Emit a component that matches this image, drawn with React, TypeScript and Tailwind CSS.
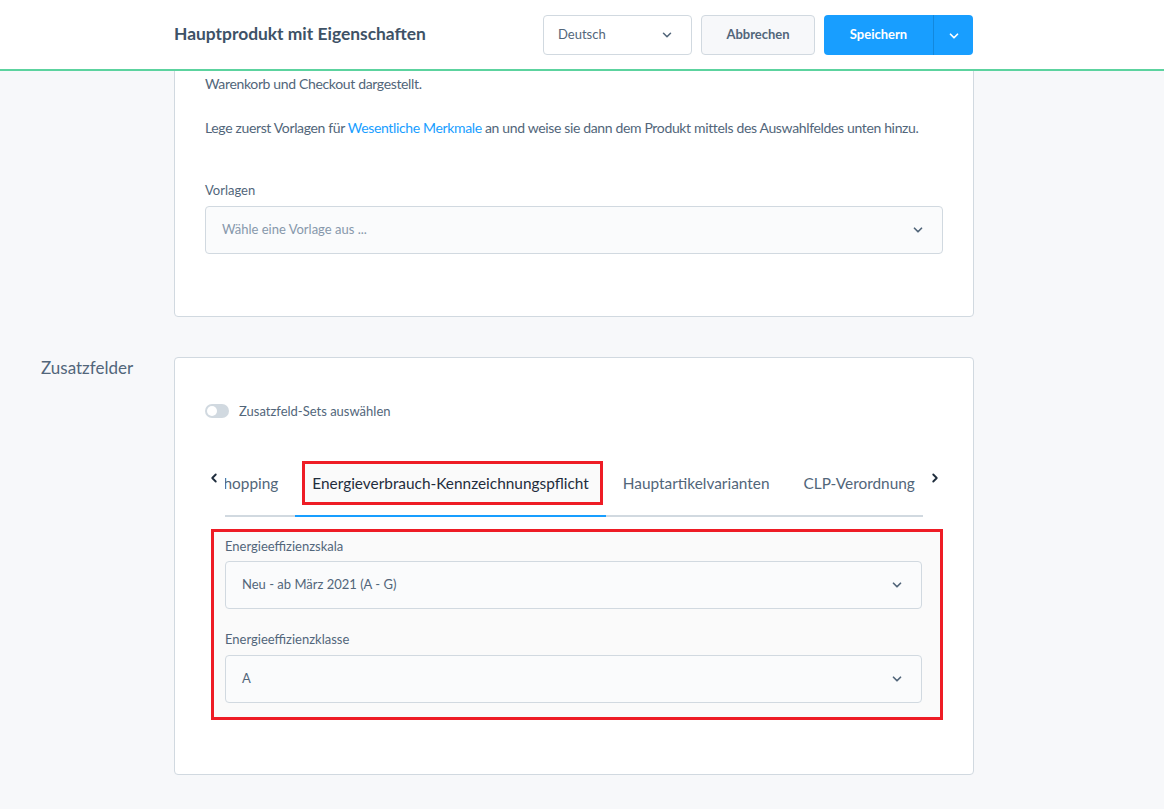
import { useLayoutEffect, useRef } from 'react'
import { ChevronDown, ChevronLeft, ChevronRight } from 'lucide-react'

const tabs = [
  'Google Shopping',
  'Energieverbrauch-Kennzeichnungspflicht',
  'Hauptartikelvarianten',
  'CLP-Verordnung',
]

function Select({ value, placeholder }: { value?: string; placeholder?: string }) {
  return (
    <div className="flex h-[48px] items-center justify-between rounded-[4px] border border-[#d1d9e0] bg-[#fafbfc] pl-[16px] pr-[17px]">
      <span className={`text-[13px] ${value ? 'text-[#52667a]' : 'text-[#8798ab]'}`}>{value ?? placeholder}</span>
      <ChevronDown className="h-[14px] w-[14px] text-[#52667a]" strokeWidth={3} />
    </div>
  )
}

function Tabs() {
  const scroller = useRef<HTMLDivElement>(null)
  const active = useRef<HTMLButtonElement>(null)

  // scroll so the active tab sits just after the partially hidden first one
  useLayoutEffect(() => {
    if (scroller.current && active.current) {
      scroller.current.scrollLeft = active.current.offsetLeft - 70
    }
  }, [])

  return (
    <div className="mt-[38px] flex items-start">
      <div className="flex w-[20px] justify-start pl-[2px] pt-[11px]">
        <ChevronLeft className="h-[14px] w-[14px] text-[#1f2d3d]" strokeWidth={3.2} />
      </div>
      <div ref={scroller} className="relative flex-1 overflow-hidden shadow-[inset_0_-2px_0_#d1d9e0]">
        <div className="flex w-max">
          {tabs.map((tab, i) => {
            const isActive = i === 1
            return (
              <button
                key={tab}
                ref={isActive ? active : undefined}
                className={`relative px-[17px] pt-[12px] pb-[21px] text-[15.4px] leading-[22px] border-b-2 ${
                  isActive ? 'border-[#189eff] text-[#1f2d3d]' : 'border-transparent text-[#52667a]'
                }`}
              >
                {isActive && (
                  <span className="absolute left-[7px] right-[3px] top-[1px] h-[44px] border-[3px] border-[#ee1c25] bg-[#fafafa]" />
                )}
                <span className="relative">{tab}</span>
              </button>
            )
          })}
        </div>
      </div>
      <div className="flex w-[20px] justify-end pr-[1px] pt-[11px]">
        <ChevronRight className="h-[14px] w-[14px] text-[#1f2d3d]" strokeWidth={3.2} />
      </div>
    </div>
  )
}

export default function App() {
  return (
    <div className="min-h-screen bg-[#f7f8fa] font-['Lato',sans-serif] text-[#52667a]">
      <header className="fixed inset-x-0 top-0 z-10 h-[71px] border-b-2 border-[#5cd39f] bg-white">
        <div className="ml-[174px] flex h-full w-[799px] items-center justify-between">
          <h1 className="text-[17.4px] font-bold text-[#3e5266]">Hauptprodukt mit Eigenschaften</h1>
          <div className="flex items-center gap-[9px]">
            <div className="flex h-[40px] w-[149px] items-center justify-between rounded-[4px] border border-[#d1d9e0] bg-white pl-[14px] pr-[17px]">
              <span className="text-[13px]">Deutsch</span>
              <ChevronDown className="h-[14px] w-[14px]" strokeWidth={2.6} />
            </div>
            <button className="h-[40px] w-[114px] rounded-[4px] border border-[#d1d9e0] bg-[#f7f8fa] text-[13px] font-bold text-[#52667a]">
              Abbrechen
            </button>
            <div className="flex h-[40px] w-[149px] overflow-hidden rounded-[4px] bg-[#189eff] text-white">
              <button className="w-[109px] text-[13px] font-bold">Speichern</button>
              <div className="w-px bg-[#1388dd]" />
              <button className="flex flex-1 items-center justify-center pt-[3px]">
                <ChevronDown className="h-[14px] w-[14px]" strokeWidth={3} />
              </button>
            </div>
          </div>
        </div>
      </header>

      <main className="pb-[34px] pl-[41px]">
        <div className="grid grid-cols-[133px_800px]">
          <div />
          <section className="rounded-b-[4px] border border-[#d1d9e0] bg-white px-[30px] pt-[50px] pb-[62px]">
            <div className="text-[14px] leading-[22px] tracking-[-0.35px]">
              <p>
                Wesentliche Merkmale werden bei dem Produkt für deine Kundinnen und Kunden sichtbar auf der Seite, im
                <br />
                Warenkorb und Checkout dargestellt.
              </p>
              <p className="mt-[22px] whitespace-nowrap">
                Lege zuerst Vorlagen für <span className="text-[#189eff]">Wesentliche Merkmale</span> an und weise sie dann dem
                Produkt mittels des Auswahlfeldes unten hinzu.
              </p>
            </div>
            <label className="mt-[42px] block text-[13px] leading-[18px]">Vorlagen</label>
            <div className="mt-[7px]">
              <Select placeholder="Wähle eine Vorlage aus ..." />
            </div>
          </section>

          <h2 className="mt-[40px] text-[17px] leading-[22px]">Zusatzfelder</h2>
          <section className="mt-[40px] rounded-[4px] border border-[#d1d9e0] bg-white px-[30px] pt-[42px] pb-[54px]">
            <div className="flex items-center gap-[10px] leading-[22px]">
              <span className="flex h-[14px] w-[24px] items-center rounded-full bg-[#d1d9e0] pl-[2px]">
                <span className="h-[10px] w-[10px] rounded-full bg-white" />
              </span>
              <span className="text-[13px]">Zusatzfeld-Sets auswählen</span>
            </div>

            <Tabs />

            <div className="mt-[12px] ml-[6px] w-[732px] border-[3px] border-[#ee1c25] bg-[#fafafa] pt-[5px] pr-[18px] pb-[14px] pl-[11px]">
              <label className="block text-[13px] leading-[18px]">Energieeffizienzskala</label>
              <div className="mt-[6px]">
                <Select value="Neu - ab März 2021 (A - G)" />
              </div>
              <label className="mt-[21px] block text-[13px] leading-[18px]">Energieeffizienzklasse</label>
              <div className="mt-[7px]">
                <Select value="A" />
              </div>
            </div>
          </section>
        </div>
      </main>
    </div>
  )
}
